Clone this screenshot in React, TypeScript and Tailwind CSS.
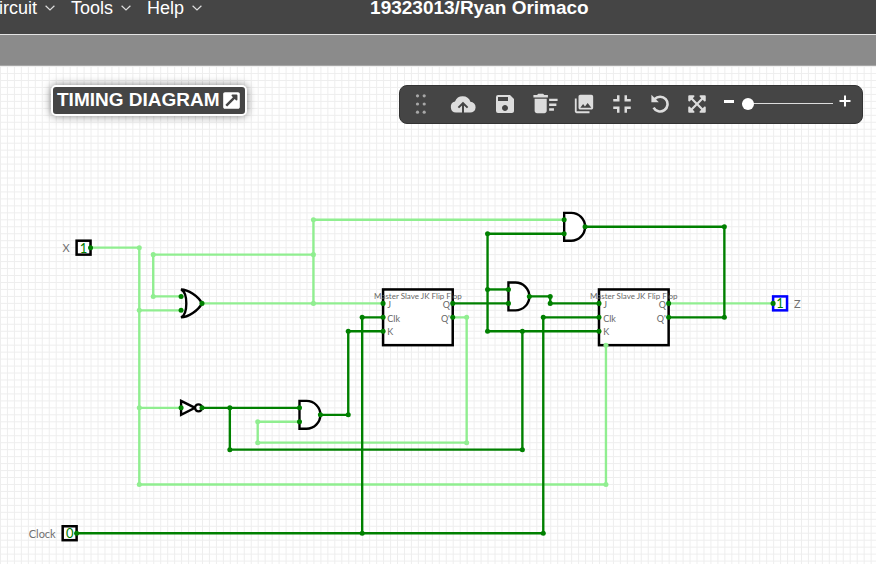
import { FaExternalLinkSquareAlt, FaExpandArrowsAlt } from "react-icons/fa";
import { MdDeleteSweep, MdFullscreenExit, MdPhotoLibrary, MdSave } from "react-icons/md";
import type { ReactNode } from "react";

const SCALE = 0.6965;
const ORIGIN_X = 0;
const ORIGIN_Y = 14.5;
const DARK = "#008000";
const LIGHT = "#90ee90";

type Point = [number, number];

const px = ([x, y]: Point) => ({
  x: ORIGIN_X + x * 10 * SCALE,
  y: ORIGIN_Y + y * 10 * SCALE,
});

// Wires as polylines in grid cells
const lightWires: Point[][] = [
  [[13, 24], [20, 24], [20, 58], [87, 58], [87, 38]],
  [[20, 33], [26, 33]],
  [[20, 47], [26, 47]],
  [[26, 31], [22, 31], [22, 25], [45, 25]],
  [[29, 32], [55, 32]],
  [[45, 32], [45, 20], [81, 20]],
  [[65, 34], [67, 34], [67, 52], [37, 52], [37, 49], [43, 49]],
  [[96, 32], [111, 32]],
];
const darkWires: Point[][] = [
  [[11, 65], [78, 65], [78, 34], [86, 34]],
  [[52, 65], [52, 34], [55, 34]],
  [[29, 47], [43, 47]],
  [[33, 47], [33, 53], [75, 53], [75, 36]],
  [[46, 48], [50, 48], [50, 36], [55, 36]],
  [[65, 32], [73, 32]],
  [[73, 30], [70, 30]],
  [[81, 22], [70, 22], [70, 36], [86, 36]],
  [[76, 31], [79, 31], [79, 32], [86, 32]],
  [[84, 21], [104, 21], [104, 34], [96, 34]],
];
const lightNodes: Point[] = [
  [20, 24], [20, 33], [20, 47], [20, 58], [87, 58], [22, 31], [22, 25], [45, 25],
  [45, 32], [45, 20], [67, 34], [67, 52], [37, 52], [37, 49], [87, 38],
];
const darkNodes: Point[] = [
  [13, 24], [11, 65], [52, 65], [78, 65], [78, 34], [52, 34], [26, 31], [26, 33], [29, 32],
  [26, 47], [29, 47], [33, 47], [33, 53], [75, 53], [75, 36], [43, 47], [43, 49], [46, 48],
  [50, 48], [50, 36], [55, 32], [55, 34], [55, 36], [65, 32], [65, 34], [70, 22], [70, 30],
  [70, 36], [73, 30], [73, 32], [76, 31], [79, 31], [79, 32], [81, 20], [81, 22], [84, 21],
  [104, 21], [104, 34], [86, 32], [86, 34], [86, 36], [96, 32], [96, 34], [111, 32],
];

function Wires({ wires, color }: { wires: Point[][]; color: string }) {
  return (
    <g fill="none" stroke={color} strokeWidth="3.4">
      {wires.map((w, i) => (
        <polyline key={i} points={w.map(([x, y]) => `${x * 10},${y * 10}`).join(" ")} />
      ))}
    </g>
  );
}

function Nodes({ nodes, color }: { nodes: Point[]; color: string }) {
  return (
    <g fill={color}>
      {nodes.map(([x, y], i) => (
        <circle key={i} cx={x * 10} cy={y * 10} r="3.6" />
      ))}
    </g>
  );
}

const andGates: Point[] = [[82, 21], [74, 31], [44, 48]];

function Label({ at, children, className = "text-[11px] fill-[#707070]", anchor = "start" }: {
  at: Point;
  children: ReactNode;
  className?: string;
  anchor?: "start" | "middle" | "end";
}) {
  const p = px(at);
  return (
    <text x={p.x} y={p.y} textAnchor={anchor} dominantBaseline="central" className={className}>
      {children}
    </text>
  );
}

function FlipFlopLabels({ x }: { x: number }) {
  const title = "text-[8px] fill-[#666666]";
  const pin = "text-[9px] fill-[#666666]";
  return (
    <>
      <Label at={[x + 5, 31]} anchor="middle" className={title}>Master Slave JK Flip Flop</Label>
      <Label at={[x + 0.6, 32.1]} className={pin}>J</Label>
      <Label at={[x + 0.6, 34.1]} className={pin}>Clk</Label>
      <Label at={[x + 0.6, 36.1]} className={pin}>K</Label>
      <Label at={[x + 9.6, 32.1]} anchor="end" className={pin}>Q</Label>
      <Label at={[x + 9.6, 34.1]} anchor="end" className={pin}>Q'</Label>
    </>
  );
}

function Circuit() {
  const digit = "text-[13px] fill-[#008000]";
  return (
    <svg className="block h-full w-full flex-1 font-[Lato,sans-serif]" role="img" aria-label="Circuit">
      <defs>
        <pattern id="grid" x={ORIGIN_X} y={ORIGIN_Y - 0.5} width={10 * SCALE} height={10 * SCALE} patternUnits="userSpaceOnUse">
          <path d="M0 0.5H7M0.5 0V7" stroke="#eeeeee" strokeWidth="1" />
        </pattern>
      </defs>
      <rect width="100%" height="100%" fill="url(#grid)" />
      <g transform={`translate(${ORIGIN_X} ${ORIGIN_Y}) scale(${SCALE})`}>
        <g fill="#fff" stroke="#000" strokeWidth="3.6">
          <rect x="550" y="300" width="100" height="80" />
          <rect x="860" y="300" width="100" height="80" />
          <rect x="110" y="230" width="20" height="20" />
          <rect x="90" y="640" width="20" height="20" />
          <rect x="1110" y="310" width="20" height="20" stroke="#0000ff" />
        </g>
        <Wires wires={lightWires} color={LIGHT} />
        <Wires wires={darkWires} color={DARK} />
        <g fill="#fff" stroke="#000" strokeWidth="3.4">
          {andGates.map(([x, y]) => (
            <path key={x} transform={`translate(${x * 10} ${y * 10})`} d="M-10-20H0A20 20 0 0 1 0 20H-10Z" />
          ))}
          <path transform="translate(270 320)" d="M-10-20C0-20 15-10 20 0C15 10 0 20-10 20C0 15 0-15-10-20Z" />
          <path transform="translate(270 470)" d="M-10-10L10 0L-10 10Z" />
          <circle cx="285" cy="470" r="5" />
        </g>
        <Nodes nodes={lightNodes} color={LIGHT} />
        <Nodes nodes={darkNodes} color={DARK} />
      </g>
      <FlipFlopLabels x={55} />
      <FlipFlopLabels x={86} />
      <Label at={[12, 24]} anchor="middle" className={digit}>1</Label>
      <Label at={[10, 65]} anchor="middle" className={digit}>0</Label>
      <Label at={[112, 32]} anchor="middle" className={digit}>1</Label>
      <Label at={[10, 24]} anchor="end">X</Label>
      <Label at={[8, 65]} anchor="end">Clock</Label>
      <Label at={[114, 32]}>Z</Label>
    </svg>
  );
}

function MenuButton({ children }: { children: string }) {
  return (
    <button className="flex items-center gap-2">
      {children}
      <svg width="10" height="6" viewBox="0 0 10 6" fill="none" stroke="#dddddd" strokeWidth="1.2">
        <path d="M0.6 0.8L5 5L9.4 0.8" />
      </svg>
    </button>
  );
}

function Tool({ label, className, children }: { label: string; className: string; children: ReactNode }) {
  return (
    <button aria-label={label} className={`flex shrink-0 items-center justify-center ${className}`}>
      {children}
    </button>
  );
}

function Toolbar() {
  return (
    <div className="absolute top-[19px] right-[13px] flex h-[39px] w-[464px] items-stretch rounded-lg border border-[#333333] bg-[#454545] pb-[2px] text-[#dddddd]">
      <Tool label="Move panel" className="w-[41px]">
        <svg width="12" height="20" viewBox="0 0 12 20" fill="#a8a8a8">
          <circle cx="2.5" cy="1.8" r="1.6" /><circle cx="9.2" cy="1.8" r="1.6" />
          <circle cx="2.5" cy="10" r="1.6" /><circle cx="9.2" cy="10" r="1.6" />
          <circle cx="2.5" cy="18.2" r="1.6" /><circle cx="9.2" cy="18.2" r="1.6" />
        </svg>
      </Tool>
      <Tool label="Save online" className="w-[44px]">
        <svg width="26" height="18" viewBox="0 0 26 18">
          <path d="M6 17.6A5.6 5.6 0 0 1 5 6.6A8.2 8.2 0 0 1 20.4 6.8A5.4 5.4 0 0 1 20 17.6Z" fill="#dddddd" />
          <path d="M13 18V9M8.4 12.6L13 8.2L17.6 12.6" fill="none" stroke="#454545" strokeWidth="2" />
        </svg>
      </Tool>
      <Tool label="Save offline" className="w-[40px]"><MdSave size={24} /></Tool>
      <Tool label="Clear circuit" className="w-[40px]"><MdDeleteSweep size={29} /></Tool>
      <Tool label="Download as image" className="w-[38px]"><MdPhotoLibrary size={22} /></Tool>
      <Tool label="Fit to screen" className="w-[38px]"><MdFullscreenExit size={30} /></Tool>
      <Tool label="Undo" className="w-[38px]">
        <svg width="18" height="19" viewBox="0 0 18 19">
          <path d="M3.6 5.2A7.4 7.4 0 1 1 2.6 13.6" fill="none" stroke="#dddddd" strokeWidth="2.6" />
          <path d="M0.4 0.8V8.2H7.8Z" fill="#dddddd" />
        </svg>
      </Tool>
      <Tool label="View full screen" className="w-[36px]"><FaExpandArrowsAlt size={20} /></Tool>
      <Tool label="Zoom out" className="w-[27px] pb-1">
        <span className="h-[3px] w-[10px] bg-white" />
      </Tool>
      <input
        type="range"
        aria-label="Zoom"
        min="0"
        max="45"
        defaultValue="0"
        className="my-auto h-3 w-[91px] appearance-none bg-transparent [&::-webkit-slider-runnable-track]:h-px [&::-webkit-slider-runnable-track]:bg-[#dddddd] [&::-webkit-slider-thumb]:-mt-[5px] [&::-webkit-slider-thumb]:h-3 [&::-webkit-slider-thumb]:w-3 [&::-webkit-slider-thumb]:appearance-none [&::-webkit-slider-thumb]:rounded-full [&::-webkit-slider-thumb]:bg-white"
      />
      <Tool label="Zoom in" className="w-[23px] pb-[6px]">
        <svg width="12" height="12" viewBox="0 0 12 12" stroke="#ffffff" strokeWidth="2">
          <path d="M6 0.5V11.5M0.5 6H11.5" />
        </svg>
      </Tool>
    </div>
  );
}

export default function App() {
  return (
    <div className="flex min-h-screen flex-col overflow-hidden bg-white font-['Liberation_Sans',Arial,sans-serif]">
      <header className="flex h-[35px] shrink-0 items-start border-b border-[#e4e4e4] bg-[#454545] text-[18px] leading-4 text-white">
        <nav className="-ml-[14px] flex gap-4">
          <MenuButton>Circuit</MenuButton>
          <MenuButton>Tools</MenuButton>
          <MenuButton>Help</MenuButton>
        </nav>
        <h1 className="ml-[168px] text-[19px] leading-4 font-bold whitespace-nowrap">19323013/Ryan Orimaco</h1>
      </header>
      <div className="h-[31px] shrink-0 border-b border-[#a6a6a6] bg-[#8b8b8b]" />
      <main className="relative flex flex-1 flex-col">
        <Circuit />
        <button className="absolute top-[19px] left-[51px] flex h-[31px] items-center gap-[2px] rounded-[5px] border-2 border-white bg-[#454545] px-1 text-[19px] font-bold text-white shadow-[0_0_9px_rgba(0,0,0,0.5)]">
          TIMING DIAGRAM
          <FaExternalLinkSquareAlt size={19} />
        </button>
        <Toolbar />
      </main>
    </div>
  );
}
